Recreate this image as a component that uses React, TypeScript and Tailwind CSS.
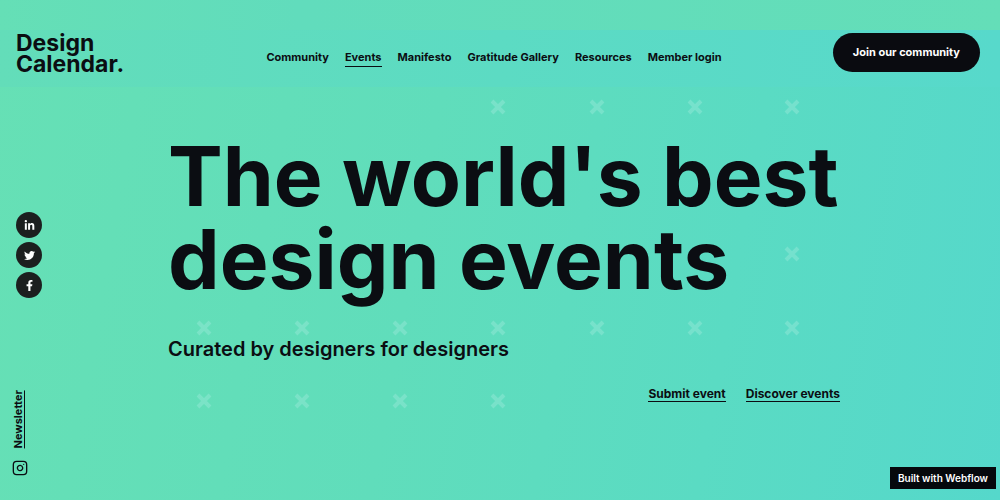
import { FaFacebookF, FaLinkedinIn, FaTwitter } from "react-icons/fa";
import { FiInstagram } from "react-icons/fi";

const navItems = ["Community", "Events", "Manifesto", "Gratitude Gallery", "Resources", "Member login"];

const socials = [
  { label: "LinkedIn", Icon: FaLinkedinIn },
  { label: "Twitter", Icon: FaTwitter },
  { label: "Facebook", Icon: FaFacebookF },
];

const crosses = [
  [498, 107], [597, 107], [695, 107], [792, 107],
  [792, 254],
  [204, 328], [302, 328], [400, 328], [498, 328], [597, 328], [695, 328], [792, 328],
  [204, 401], [302, 401], [400, 401], [498, 401],
];

function CrossPattern() {
  return (
    <svg
      className="pointer-events-none absolute top-0 left-0 h-[500px] w-[1000px]"
      viewBox="0 0 1000 500"
      aria-hidden="true"
    >
      {crosses.map(([x, y]) => (
        <path
          key={`${x}-${y}`}
          d={`M${x - 6} ${y - 6}l12 12M${x + 6} ${y - 6}l-12 12`}
          stroke="#a0ebdb"
          strokeOpacity="0.4"
          strokeWidth="4"
        />
      ))}
    </svg>
  );
}

function Header() {
  return (
    <header className="mt-[30px] grid grid-cols-[1fr_auto_1fr] items-start bg-linear-to-r from-[#63ddb9] via-[#5cdbc3] via-50% to-[#57d9cb] pt-[3px] pr-5 pb-3 pl-4">
      <a href="#home" className="justify-self-start text-[23px] leading-[21px] font-bold">
        Design
        <br />
        Calendar.
      </a>
      <nav className="mr-2 flex gap-4 pt-4 text-[11px] leading-4 font-bold">
        {navItems.map((item) => (
          <a
            key={item}
            href="#nav"
            className={item === "Events" ? "border-b border-[#0b0d12] pb-px" : "border-b border-transparent pb-px"}
          >
            {item}
          </a>
        ))}
      </nav>
      <button
        type="button"
        className="h-[39px] justify-self-end rounded-full bg-[#0a0b10] px-5 text-[11px] font-bold text-white"
      >
        Join our community
      </button>
    </header>
  );
}

export default function App() {
  return (
    <div className="relative flex min-h-screen flex-col bg-linear-[100deg,#66e0b5_0%,#60ddbb_42%,#5adbc3_72%,#55d8cb_100%] font-['Inter',sans-serif] text-[#0b0d12]">
      <div className="absolute inset-x-0 top-0 h-[30px] bg-linear-to-r from-[#65dfb6] via-[#61dcbc] via-30% to-[#64deb8]" />
      <CrossPattern />
      <div className="relative flex flex-1 flex-col">
        <Header />
        <div className="flex flex-1">
          <aside className="flex w-[168px] shrink-0 flex-col items-start justify-between pt-[125px] pb-6 pl-4">
            <div className="flex flex-col gap-1">
              {socials.map(({ label, Icon }) => (
                <a
                  key={label}
                  href="#social"
                  aria-label={label}
                  className="flex size-[26px] items-center justify-center rounded-full bg-[#1c1f1f] text-[11px] text-white"
                >
                  <Icon />
                </a>
              ))}
            </div>
            <div className="-ml-1 flex flex-col items-start gap-3">
              <a
                href="#newsletter"
                className="rotate-180 border-l border-[#0b0d12] text-[11px] leading-3 font-bold [writing-mode:vertical-rl]"
              >
                Newsletter
              </a>
              <a href="#instagram" aria-label="Instagram">
                <FiInstagram className="size-4" />
              </a>
            </div>
          </aside>
          <main className="w-[672px] pt-12">
            <h1 className="text-[82px] leading-[83px] font-bold whitespace-nowrap">
              The world's best
              <br />
              design events
            </h1>
            <p className="mt-[34px] text-[20px] leading-7 font-semibold">Curated by designers for designers</p>
            <div className="mt-6 flex justify-end gap-5 text-[12px] leading-[14px] font-bold">
              <a href="#submit" className="border-b border-[#0b0d12]">Submit event</a>
              <a href="#discover" className="border-b border-[#0b0d12]">Discover events</a>
            </div>
          </main>
        </div>
      </div>
      <a
        href="#webflow"
        className="absolute right-1 bottom-[11px] bg-[#05080c] px-2 py-1 text-[10px] leading-[14px] font-semibold text-white"
      >
        Built with Webflow
      </a>
    </div>
  );
}
